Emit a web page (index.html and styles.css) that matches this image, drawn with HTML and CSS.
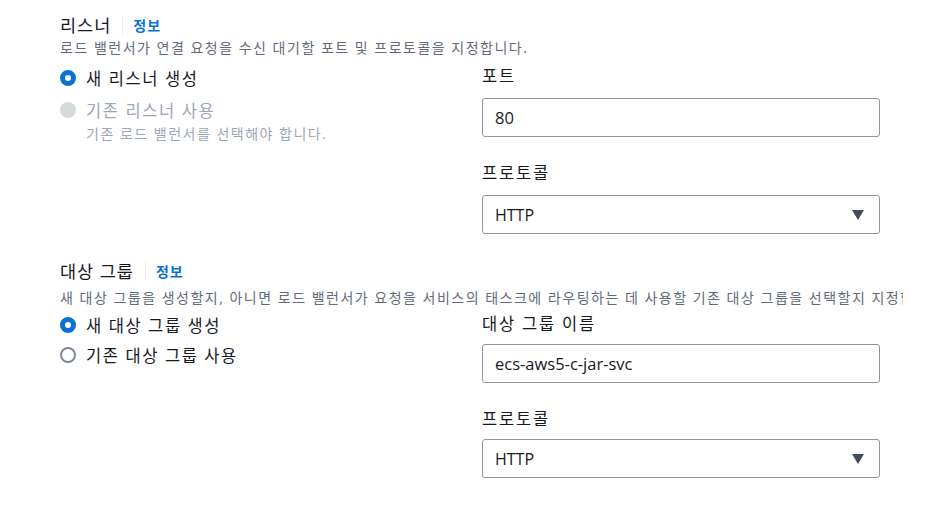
FILE: index.html
```html
<!DOCTYPE html>
<html lang="ko">
<head>
    <meta charset="UTF-8">
    <meta name="viewport" content="width=device-width, initial-scale=1.0">
    <title>리스너 및 대상 그룹</title>
    <link rel="stylesheet" href="styles.css">
</head>

<body>
    <div class="wrapper">
        <div class="section first">
            <div class="header">
                <h2>리스너</h2>
                <span class="divider"></span>
                <a href="#" class="info">정보</a>
            </div>
            <p class="desc">로드 밸런서가 연결 요청을 수신 대기할 포트 및 프로토콜을 지정합니다.</p>
            <div class="grid">
                <div class="radios">
                    <label class="radio checked">
                        <span class="dot"></span>
                        <span>새 리스너 생성</span>
                    </label>
                    <label class="radio disabled">
                        <span class="dot"></span>
                        <span>기존 리스너 사용</span>
                    </label>
                    <p class="hint">기존 로드 밸런서를 선택해야 합니다.</p>
                </div>
                <div class="fields">
                    <div class="field">
                        <div class="label">포트</div>
                        <div class="input">80</div>
                    </div>
                    <div class="field">
                        <div class="label">프로토콜</div>
                        <div class="input select">
                            <span>HTTP</span>
                            <span class="caret"></span>
                        </div>
                    </div>
                </div>
            </div>
        </div>

        <div class="section second">
            <div class="header">
                <h2>대상 그룹</h2>
                <span class="divider"></span>
                <a href="#" class="info">정보</a>
            </div>
            <p class="desc">새 대상 그룹을 생성할지, 아니면 로드 밸런서가 요청을 서비스의 태스크에 라우팅하는 데 사용할 기존 대상 그룹을 선택할지 지정합니다.</p>
            <div class="grid">
                <div class="radios">
                    <label class="radio checked">
                        <span class="dot"></span>
                        <span>새 대상 그룹 생성</span>
                    </label>
                    <label class="radio">
                        <span class="dot"></span>
                        <span>기존 대상 그룹 사용</span>
                    </label>
                </div>
                <div class="fields">
                    <div class="field">
                        <div class="label">대상 그룹 이름</div>
                        <div class="input">ecs-aws5-c-jar-svc</div>
                    </div>
                    <div class="field">
                        <div class="label">프로토콜</div>
                        <div class="input select">
                            <span>HTTP</span>
                            <span class="caret"></span>
                        </div>
                    </div>
                </div>
            </div>
        </div>
    </div>
</body>
</html>
```

FILE: styles.css
```css
body {
    margin: 0;
    background: #ffffff;
    color: #16191f;
    font-family: "Open Sans", "Noto Sans CJK KR", sans-serif;
}

.wrapper {
    width: 843px;
    margin-left: 60px;
    padding-top: 12px;
    overflow: hidden;
}

.section.second {
    margin-top: 24px;
}

.header {
    display: flex;
    align-items: center;
    height: 26px;
}

.header h2 {
    margin: 0;
    font-size: 17.5px;
    font-weight: 400;
    line-height: 26px;
    letter-spacing: 1px;
}

.divider {
    width: 1px;
    height: 18px;
    background: #e9ebed;
    margin: 0 10px 0 11px;
}

.info {
    color: #0972d3;
    font-size: 14px;
    font-weight: 700;
    letter-spacing: 1px;
    text-decoration: none;
}

.desc {
    margin: 0;
    font-size: 14px;
    line-height: 20px;
    letter-spacing: 1.5px;
    color: #5f6b7a;
    white-space: nowrap;
}

.second .desc {
    margin-top: 4px;
}

.grid {
    display: grid;
    grid-template-columns: 422px 398px;
    margin-top: 6px;
}

.second .grid {
    margin-top: 4px;
}

.radios {
    display: flex;
    flex-direction: column;
    padding-top: 2px;
}

.second .radios {
    padding-top: 1px;
}

.radio {
    display: flex;
    align-items: center;
    gap: 10px;
    height: 24px;
    font-size: 16.5px;
    letter-spacing: 1.6px;
    margin-bottom: 8px;
}

.second .radio {
    margin-bottom: 6px;
}

.dot {
    box-sizing: border-box;
    width: 16px;
    height: 16px;
    border-radius: 50%;
    border: 2px solid #7d8998;
    background: #ffffff;
    flex-shrink: 0;
}

.radio.checked .dot {
    border: 5px solid #0972d3;
}

.radio.disabled {
    color: #9ba7b6;
    margin-bottom: 0;
}

.radio.disabled .dot {
    border: none;
    background: #d5dbdb;
}

.hint {
    margin: 2px 0 0 26px;
    font-size: 14px;
    line-height: 20px;
    letter-spacing: 1.5px;
    color: #9ba7b6;
}

.field + .field {
    margin-top: 24px;
}

.label {
    font-size: 16.5px;
    line-height: 24px;
    letter-spacing: 1.8px;
    margin-bottom: 10px;
}

.second .label {
    margin-bottom: 8px;
}

.input {
    box-sizing: border-box;
    height: 39px;
    border: 1px solid #8c95a0;
    border-radius: 3px;
    padding: 0 12px;
    display: flex;
    align-items: center;
    font-size: 16.5px;
}

.select {
    font-size: 16px;
    justify-content: space-between;
}

.caret {
    width: 0;
    height: 0;
    border-left: 6px solid transparent;
    border-right: 6px solid transparent;
    border-top: 10px solid #414d5c;
    margin-right: 3px;
}
```
